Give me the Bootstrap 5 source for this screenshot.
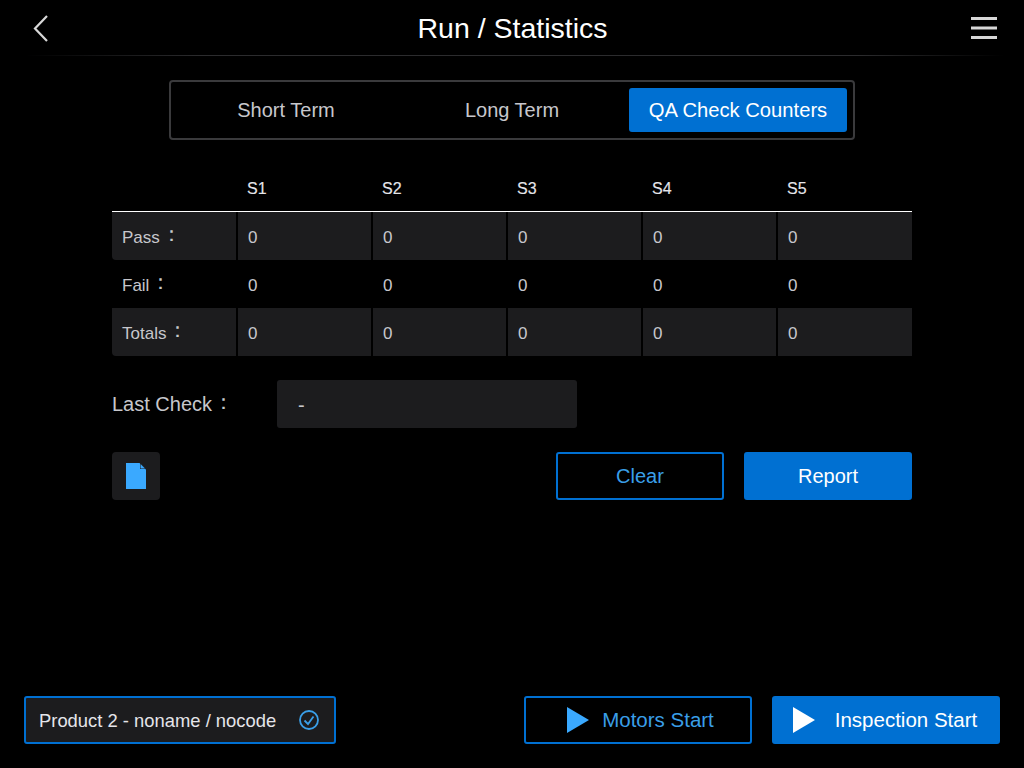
<!doctype html>
<html lang="en">
<head>
<meta charset="utf-8">
<title>Run / Statistics</title>
<link href="https://cdn.jsdelivr.net/npm/bootstrap@5.3.0/dist/css/bootstrap.min.css" rel="stylesheet">
<style>
html,body{height:100%;}
body{background:#000;color:#c7c7cc;font-family:"Liberation Sans",Arial,sans-serif;overflow:hidden;}
.screen{width:1024px;height:768px;}
.topbar{height:56px;padding:0 27px 0 32px;position:relative;}
.topbar::after{content:"";position:absolute;left:25px;right:20px;bottom:0;height:1px;background:linear-gradient(90deg,#000,#2c2c2e 18%,#2c2c2e 85%,#000);}
.page-title{font-size:28.5px;color:#fff;line-height:1;margin:0 0 0 6px;font-weight:400;}
.icon-btn{background:none;border:0;padding:0;line-height:0;}
.tabs-box{width:686px;height:60px;margin:24px auto 0;border:2px solid #3a3a3c;border-radius:4px;padding:6px;}
.tab-item{background:none;border:0;color:#c7c7cc;font-size:20px;height:44px;border-radius:3px;padding:0;}
.tab-short{width:218px;}.tab-long{width:234px;}.tab-qa{width:218px;margin-left:auto;background:#0070d2;color:#fff;font-size:20.2px;}
.content{width:800px;margin:0 auto;}
.stats{margin:30px 0 0;width:800px;table-layout:fixed;border-collapse:separate;border-spacing:0;--bs-table-bg:transparent;--bs-table-color:#c7c7cc;font-size:17px;}
.stats col{width:135px;}
.stats col:first-child{width:126px;}
.stats col:last-child{width:134px;}
.stats th,.stats td{vertical-align:middle;border:0;font-weight:400;box-shadow:none;}
.stats td{padding:4px 10px 0;height:48px;border-right:2px solid #000;}
.stats td:last-child{border-right:0;}
.stats thead th{height:42px;padding:0 9px 3px;color:#e5e5ea;font-size:16px;border-bottom:1px solid #fff;-webkit-text-stroke:.15px #e5e5ea;}
.stats .filled td{background:#1c1c1e;}
.stats .filled td:first-child{border-radius:0 0 0 4px;}
.colon{font-size:21px;line-height:1;margin-left:1px;position:relative;top:-2px;}
.last-row{margin-top:24px;height:48px;font-size:20px;color:#c7c7cc;}
.last-label{width:165px;}
.last-value{width:300px;height:48px;background:#1c1c1e;border-radius:3px;padding:2px 0 0 21px;font-size:20px;}
.act-row{margin-top:24px;}
.file-btn{width:48px;height:48px;background:#1c1c1e;border:0;border-radius:4px;padding:0;}
.ui-btn{height:48px;border-radius:3px;font-size:20px;padding:0;}
.ui-btn-line{background:#000;border:2px solid #0070d2;color:#3a9fe8;}
.ui-btn-fill{background:#0070d2;border:2px solid #0070d2;color:#fff;}
.w168{width:168px;}
.report-btn{margin-left:20px;}
.bottom-bar{margin-top:196px;padding:0 24px;}
.product{width:312px;height:48px;background:#1c1c1e;border:2px solid #0070d2;border-radius:3px;padding:0 15px 0 13px;font-size:18.4px;color:#e5e5ea;}
.product span{position:relative;top:1px;}
.w228{width:228px;font-size:20.5px;}
.motors-btn{gap:13px;padding-left:5px;}
.inspect-btn{gap:20px;margin-left:20px;padding-right:2px;}
</style>
</head>
<body>
<div class="screen d-flex flex-column">
  <header class="topbar d-flex align-items-center justify-content-between">
    <button class="icon-btn" aria-label="Back"><svg width="16" height="28" viewBox="0 0 16 28"><path d="M15 2 3 14.500 15 27" fill="none" stroke="#d8d8d8" stroke-width="2.200"/></svg></button>
    <h1 class="page-title">Run / Statistics</h1>
    <button class="icon-btn" aria-label="Menu"><svg width="26" height="22" viewBox="0 0 26 22"><path d="M0 1.500h26M0 11h26M0 20.500h26" stroke="#d8d8d8" stroke-width="3"/></svg></button>
  </header>

  <div class="tabs-box d-flex">
    <button class="tab-item tab-short">Short Term</button>
    <button class="tab-item tab-long">Long Term</button>
    <button class="tab-item tab-qa">QA Check Counters</button>
  </div>

  <main class="content">
    <table class="table stats">
      <colgroup><col><col><col><col><col><col></colgroup>
      <thead><tr><th></th><th>S1</th><th>S2</th><th>S3</th><th>S4</th><th>S5</th></tr></thead>
      <tbody>
        <tr class="filled"><td>Pass<span class="colon">：</span></td><td>0</td><td>0</td><td>0</td><td>0</td><td>0</td></tr>
        <tr><td>Fail<span class="colon">：</span></td><td>0</td><td>0</td><td>0</td><td>0</td><td>0</td></tr>
        <tr class="filled"><td>Totals<span class="colon">：</span></td><td>0</td><td>0</td><td>0</td><td>0</td><td>0</td></tr>
      </tbody>
    </table>

    <div class="last-row d-flex align-items-center">
      <div class="last-label">Last Check<span class="colon">：</span></div>
      <div class="last-value d-flex align-items-center">-</div>
    </div>

    <div class="act-row d-flex align-items-center">
      <button class="file-btn d-flex align-items-center justify-content-center" aria-label="File">
        <svg width="20" height="26" viewBox="0 0 20 26"><path d="M0 0h13.500L20 6.500V26H0Z" fill="#3aa9ff"/><path d="M14 0l6 6h-6Z" fill="#1c1c1e"/><path d="M14.500 1v4.500H19Z" fill="#3aa9ff"/></svg>
      </button>
      <button class="ui-btn ui-btn-line w168 ms-auto">Clear</button>
      <button class="ui-btn ui-btn-fill w168 report-btn">Report</button>
    </div>
  </main>

  <footer class="bottom-bar d-flex align-items-center">
    <div class="product d-flex align-items-center justify-content-between">
      <span>Product 2 - noname / nocode</span>
      <svg width="20" height="20" viewBox="0 0 20 20"><circle cx="10" cy="10" r="9" fill="none" stroke="#3a9fe8" stroke-width="1.800"/><path d="M5.500 10.500 9 14l5.500-7.500" fill="none" stroke="#3a9fe8" stroke-width="1.800"/></svg>
    </div>
    <button class="ui-btn ui-btn-line w228 motors-btn ms-auto d-flex align-items-center justify-content-center">
      <svg width="22" height="26" viewBox="0 0 22 26"><path d="M0 0 22 13 0 26Z" fill="#3aa9ff"/></svg><span>Motors Start</span>
    </button>
    <button class="ui-btn ui-btn-fill w228 inspect-btn d-flex align-items-center justify-content-center">
      <svg width="22" height="26" viewBox="0 0 22 26"><path d="M0 0 22 13 0 26Z" fill="#fff"/></svg><span>Inspection Start</span>
    </button>
  </footer>
</div>
<script src="https://cdn.jsdelivr.net/npm/bootstrap@5.3.0/dist/js/bootstrap.bundle.min.js"></script>
</body>
</html>
